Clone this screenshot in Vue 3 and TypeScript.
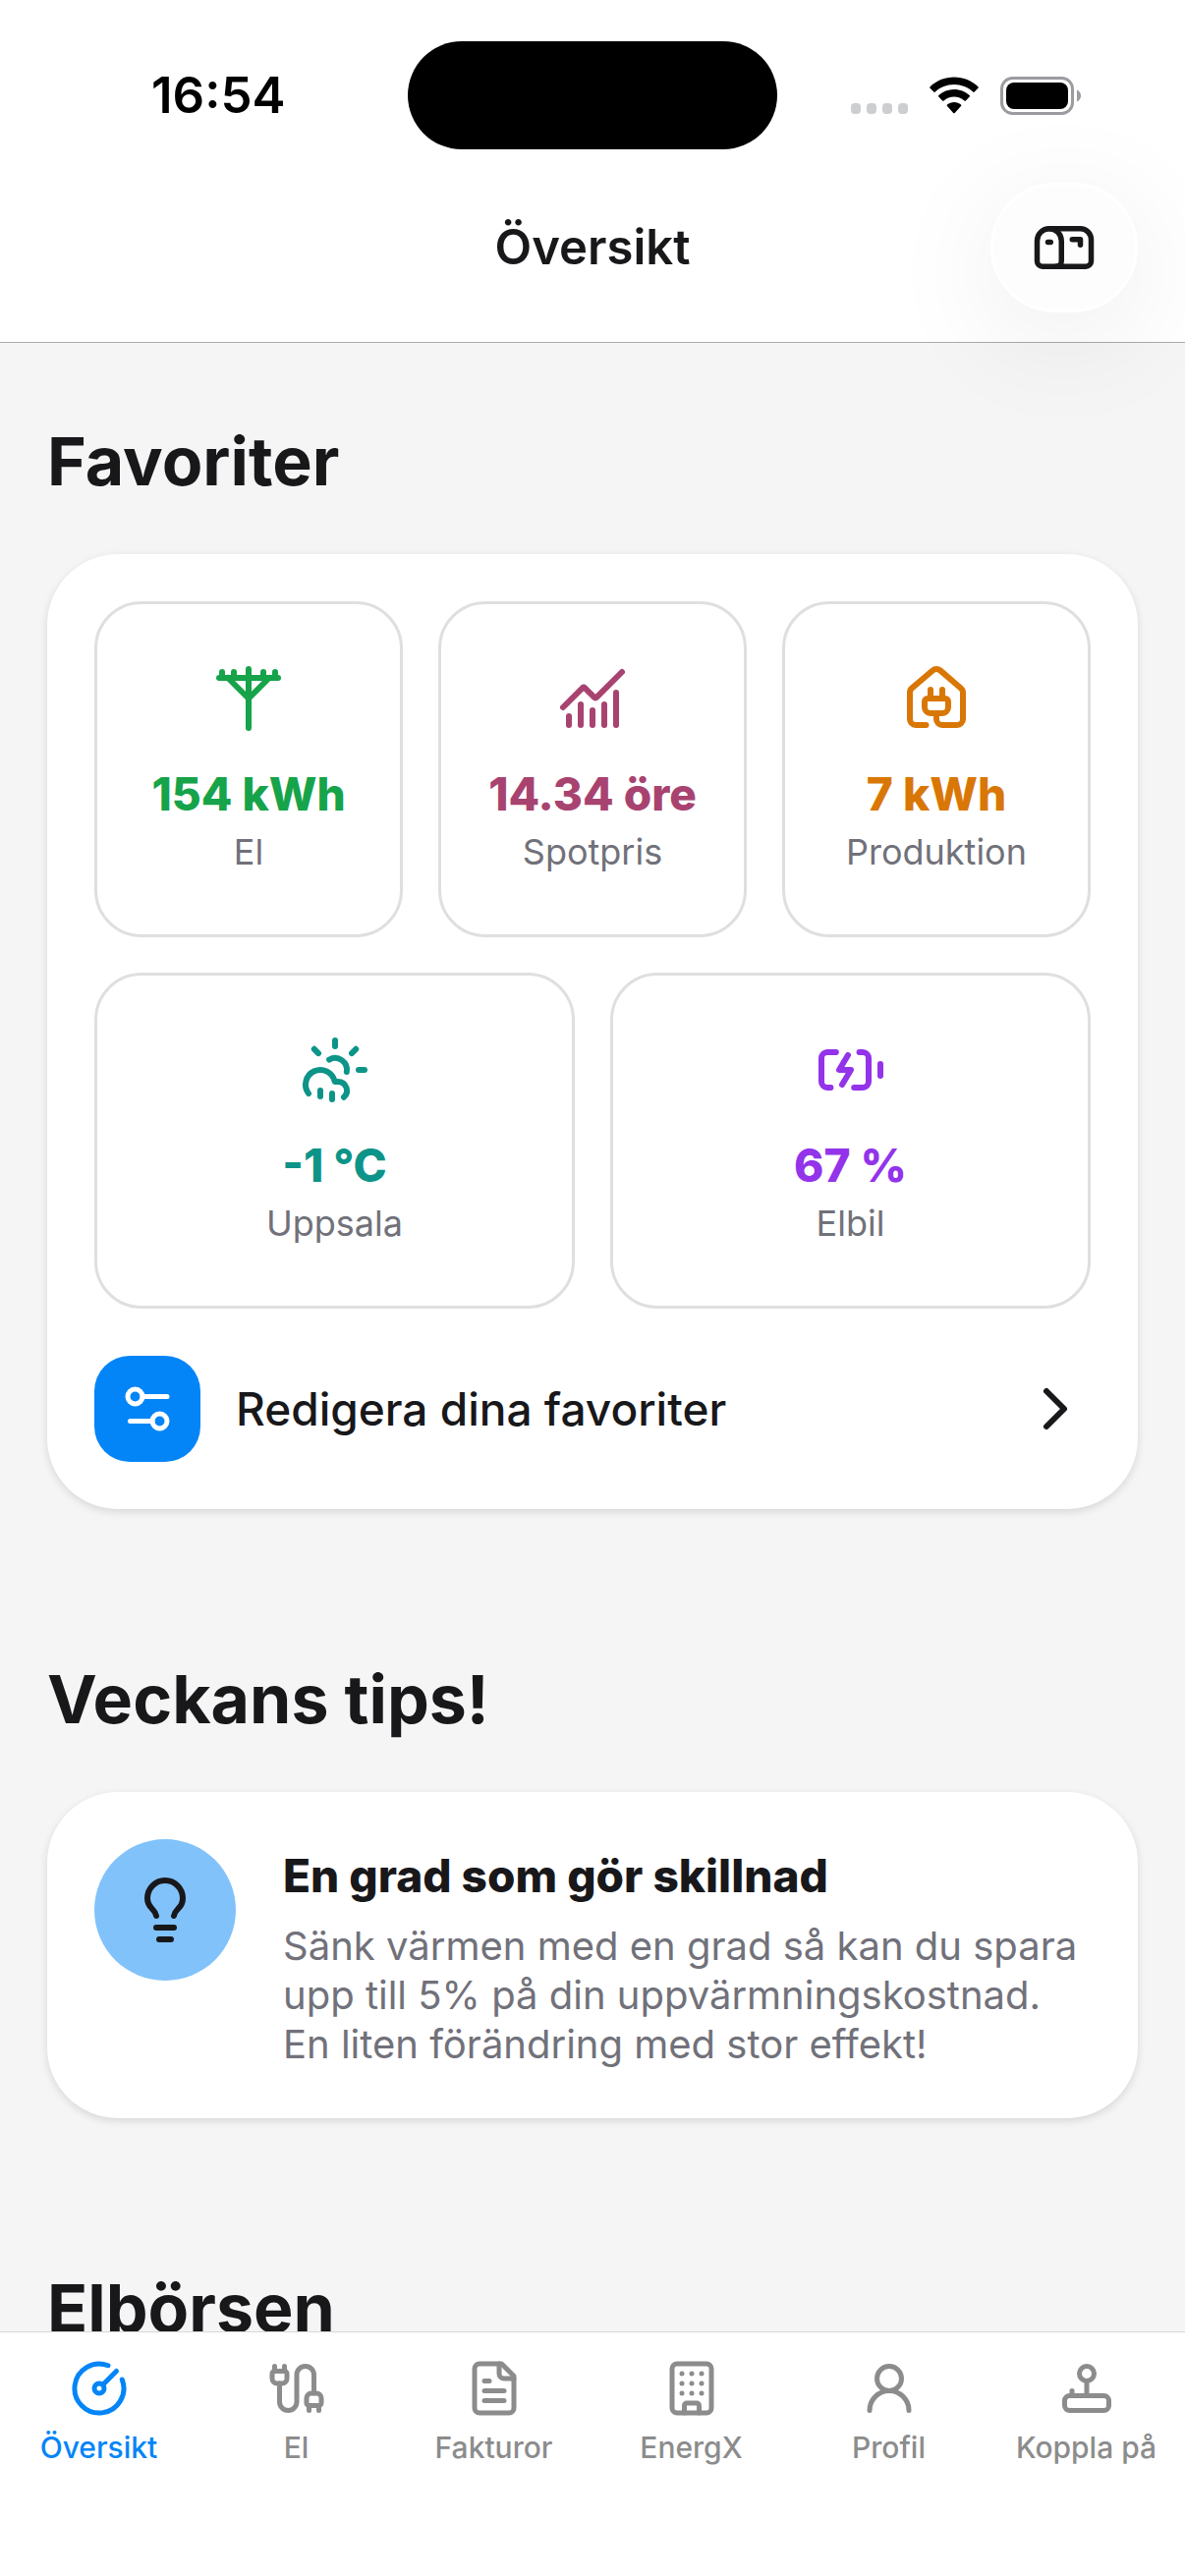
<script setup lang="ts">
import { ref } from 'vue'

interface Favorite {
  value: string
  label: string
  tone: string
  paths: string[]
}

interface Tab {
  label: string
  paths: string[]
}

const topRow: Favorite[] = [
  {
    value: '154 kWh',
    label: 'El',
    tone: 'green',
    paths: ['M12 2v20', 'M2 5h20', 'M3 3v2', 'M7 3v2', 'M17 3v2', 'M21 3v2', 'm19 5-7 7-7-7'],
  },
  {
    value: '14.34 öre',
    label: 'Spotpris',
    tone: 'plum',
    paths: [
      'M12 16v5',
      'M16 14v7',
      'M20 10v11',
      'm22 3-8.646 8.646a.5.5 0 0 1-.708 0L9.354 8.354a.5.5 0 0 0-.707 0L2 15',
      'M4 18v3',
      'M8 14v7',
    ],
  },
  {
    value: '7 kWh',
    label: 'Produktion',
    tone: 'orange',
    paths: [
      'M10 12V9',
      'M14 12V9',
      'M15 12a1 1 0 0 1 1 1v2a2 2 0 0 1-2 2h-4a2 2 0 0 1-2-2v-2a1 1 0 0 1 1-1z',
      'M8.5 21H5a2 2 0 0 1-2-2v-9a2 2 0 0 1 .709-1.528l7-6a2 2 0 0 1 2.582 0l7 6A2 2 0 0 1 21 10v9a2 2 0 0 1-2 2h-5a2 2 0 0 1-2-2v-2',
    ],
  },
]

const bottomRow: Favorite[] = [
  {
    value: '-1 °C',
    label: 'Uppsala',
    tone: 'teal',
    paths: [
      'M12 2v2',
      'm4.93 4.93 1.41 1.41',
      'M20 12h2',
      'm19.07 4.93-1.41 1.41',
      'M15.947 12.65a4 4 0 0 0-5.925-4.128',
      'M3 20a5 5 0 1 1 8.9-4H13a3 3 0 0 1 2 5.24',
      'M11 20v2',
      'M7 19v2',
    ],
  },
  {
    value: '67 %',
    label: 'Elbil',
    tone: 'violet',
    paths: [
      'm11 7-3 5h4l-3 5',
      'M14.856 6H16a2 2 0 0 1 2 2v8a2 2 0 0 1-2 2h-2.935',
      'M22 14v-4',
      'M5.14 18H4a2 2 0 0 1-2-2V8a2 2 0 0 1 2-2h2.936',
    ],
  },
]

const rows = [topRow, bottomRow]

const tabs: Tab[] = [
  {
    label: 'Översikt',
    paths: ['M15.6 2.7a10 10 0 1 0 5.7 5.7', 'M10 12a2 2 0 1 0 4 0a2 2 0 1 0-4 0', 'M13.4 10.6 19 5'],
  },
  {
    label: 'El',
    paths: [
      'M17 19a1 1 0 0 1-1-1v-2a2 2 0 0 1 2-2h2a2 2 0 0 1 2 2v2a1 1 0 0 1-1 1z',
      'M17 21v-2',
      'M19 14V6.5a1 1 0 0 0-7 0v11a1 1 0 0 1-7 0V10',
      'M21 21v-2',
      'M3 5V3',
      'M4 10a2 2 0 0 1-2-2V6a1 1 0 0 1 1-1h4a1 1 0 0 1 1 1v2a2 2 0 0 1-2 2z',
      'M7 5V3',
    ],
  },
  {
    label: 'Fakturor',
    paths: [
      'M15 2H6a2 2 0 0 0-2 2v16a2 2 0 0 0 2 2h12a2 2 0 0 0 2-2V7Z',
      'M14 2v4a2 2 0 0 0 2 2h4',
      'M10 9H8',
      'M16 13H8',
      'M16 17H8',
    ],
  },
  {
    label: 'EnergX',
    paths: [
      'M6 2h12a2 2 0 0 1 2 2v16a2 2 0 0 1-2 2H6a2 2 0 0 1-2-2V4a2 2 0 0 1 2-2z',
      'M9 22v-3a1 1 0 0 1 1-1h4a1 1 0 0 1 1 1v3',
      'M8 6h.01M12 6h.01M16 6h.01',
      'M8 10h.01M12 10h.01M16 10h.01',
      'M8 14h.01M12 14h.01M16 14h.01',
    ],
  },
  {
    label: 'Profil',
    paths: ['M7 8a5 5 0 1 0 10 0a5 5 0 1 0-10 0', 'M20 21a8 8 0 0 0-16 0'],
  },
  {
    label: 'Koppla på',
    paths: [
      'M21 17a2 2 0 0 0-2-2H5a2 2 0 0 0-2 2v2a2 2 0 0 0 2 2h14a2 2 0 0 0 2-2v-2Z',
      'M6 15v-2',
      'M12 15V9',
      'M9 6a3 3 0 1 0 6 0a3 3 0 1 0-6 0',
    ],
  },
]

const activeTab = ref(0)
</script>

<template>
  <div class="app">
    <header class="header">
      <div class="status">
        <span class="time">16:54</span>
        <span class="island"></span>
        <div class="indicators">
          <svg class="dots" viewBox="0 0 58 38" aria-hidden="true">
            <rect x="0" y="27" width="10" height="11" rx="4" />
            <rect x="16" y="27" width="10" height="11" rx="4" />
            <rect x="32" y="27" width="10" height="11" rx="4" />
            <rect x="48" y="27" width="10" height="11" rx="4" />
          </svg>
          <svg class="wifi" viewBox="0 0 50 38" aria-hidden="true">
            <path d="M25 0.5C15.500 0.500 6.900 4.200 0.600 10.200a1 1 0 0 0 0 1.500l3.700 3.800a1 1 0 0 0 1.500 0C10.900 10.800 17.600 8 25 8s14.100 2.800 19.200 7.500a1 1 0 0 0 1.500 0l3.700-3.800a1 1 0 0 0 0-1.500C43.100 4.200 34.500 0.500 25 0.500z" />
            <path d="M25 13c-6 0-11.500 2.300-15.700 6.100a1 1 0 0 0 0 1.500l3.800 3.800a1 1 0 0 0 1.500 0C17.400 22 21 20.400 25 20.400s7.600 1.600 10.400 4a1 1 0 0 0 1.500 0l3.800-3.800a1 1 0 0 0 0-1.500C36.500 15.300 31 13 25 13z" />
            <path d="M25 26c-2.700 0-5.100 1-7 2.600a1 1 0 0 0 0 1.500l6.200 6.800a1 1 0 0 0 1.500 0l6.300-6.800a1 1 0 0 0 0-1.500C30.100 27 27.700 26 25 26z" />
          </svg>
          <svg class="battery" viewBox="0 0 82 39" aria-hidden="true">
            <rect x="1.500" y="1.500" width="72" height="36" rx="11" fill="none" stroke="#9b9ba0" stroke-width="3" />
            <rect x="6" y="6" width="63" height="27" rx="8" fill="#000" />
            <path d="M78 13.500c2.500 1.200 4 3.300 4 6s-1.500 4.800-4 6z" fill="#9b9ba0" />
          </svg>
        </div>
      </div>
      <div class="toolbar">
        <h1 class="title">Översikt</h1>
        <button class="mail" type="button" aria-label="Meddelanden">
          <svg class="icon icon-mail" viewBox="0 0 24 24" aria-hidden="true">
            <path d="M22 17a2 2 0 0 1-2 2H4a2 2 0 0 1-2-2V9.500C2 7 4 5 6.500 5H18c2.200 0 4 1.800 4 4v8Z" />
            <path d="M15 9h3v2" />
            <path d="M6.500 5C9 5 11 7 11 9.500V17a2 2 0 0 1-2 2" />
            <path d="M6 10h1" />
          </svg>
        </button>
      </div>
    </header>

    <main class="content">
      <section class="section">
        <h2 class="heading">Favoriter</h2>
        <div class="card">
          <div class="rows">
            <div v-for="(row, i) in rows" :key="i" class="row">
              <button v-for="item in row" :key="item.label" type="button" class="tile" :class="item.tone">
                <svg class="icon icon-large" viewBox="0 0 24 24" aria-hidden="true">
                  <path v-for="d in item.paths" :key="d" :d="d" />
                </svg>
                <span class="value">{{ item.value }}</span>
                <span class="label">{{ item.label }}</span>
              </button>
            </div>
          </div>
          <button class="edit" type="button">
            <span class="edit-badge">
              <svg class="icon icon-medium" viewBox="0 0 24 24" aria-hidden="true">
                <path d="M20 7h-10" />
                <path d="M14 17H5" />
                <circle cx="17" cy="17" r="3" />
                <circle cx="7" cy="7" r="3" />
              </svg>
            </span>
            <span class="edit-text">Redigera dina favoriter</span>
            <svg class="icon icon-large" viewBox="0 0 24 24" aria-hidden="true">
              <path d="m9 18 6-6-6-6" />
            </svg>
          </button>
        </div>
      </section>

      <section class="section">
        <h2 class="heading">Veckans tips!</h2>
        <article class="card tip">
          <span class="tip-badge">
            <svg class="icon icon-large" viewBox="0 0 24 24" aria-hidden="true">
              <path d="M15 14c.2-1 .7-1.700 1.500-2.500 1-.9 1.500-2.200 1.500-3.500A6 6 0 0 0 6 8c0 1 .2 2.200 1.500 3.500.7.7 1.300 1.500 1.500 2.500" />
              <path d="M9 18h6" />
              <path d="M10 22h4" />
            </svg>
          </span>
          <div class="tip-body">
            <h3 class="tip-title">En grad som gör skillnad</h3>
            <p class="tip-text">
              Sänk värmen med en grad så kan du spara upp till 5% på din uppvärmningskostnad. En liten
              förändring med stor effekt!
            </p>
          </div>
        </article>
      </section>

      <section class="section">
        <h2 class="heading">Elbörsen</h2>
      </section>
    </main>

    <nav class="tabs">
      <a
        v-for="(tab, i) in tabs"
        :key="tab.label"
        href="#"
        class="tab"
        :class="{ active: i === activeTab }"
        @click.prevent="activeTab = i"
      >
        <svg class="icon icon-medium" viewBox="0 0 24 24" aria-hidden="true">
          <path v-for="d in tab.paths" :key="d" :d="d" />
        </svg>
        <span class="tab-label">{{ tab.label }}</span>
      </a>
    </nav>
  </div>
</template>

<style>
body {
  margin: 0;
}
</style>

<style scoped>
.app {
  display: flex;
  flex-direction: column;
  height: 100vh;
  overflow: hidden;
  background: #f5f5f5;
  color: #18181b;
  font-family: Inter, 'Liberation Sans', sans-serif;
}

button {
  margin: 0;
  padding: 0;
  border: 0;
  background: none;
  color: inherit;
  font: inherit;
  text-align: left;
}

.icon {
  flex: none;
  fill: none;
  stroke: currentColor;
  stroke-width: 2;
  stroke-linecap: round;
  stroke-linejoin: round;
}

.icon-large {
  width: 72px;
  height: 72px;
}

.icon-medium {
  width: 60px;
  height: 60px;
}

.icon-mail {
  width: 66px;
  height: 66px;
}

.header {
  position: relative;
  z-index: 1;
  flex: none;
  border-bottom: 1px solid #ababab;
  background: #fff;
}

.status {
  display: grid;
  grid-template-columns: 1fr auto 1fr;
  align-items: center;
  padding: 42px 106px 34px;
  color: #000;
}

.time {
  padding-left: 48px;
  font-size: 51px;
  font-weight: 600;
  line-height: 62px;
}

.island {
  width: 376px;
  height: 110px;
  border-radius: 55px;
  background: #000;
}

.indicators {
  display: flex;
  align-items: center;
  justify-content: flex-end;
  gap: 22px;
}

.dots {
  width: 58px;
  height: 38px;
  fill: #cdced0;
}

.wifi {
  width: 50px;
  height: 38px;
}

.battery {
  width: 82px;
  height: 39px;
}

.toolbar {
  display: grid;
  grid-template-columns: 1fr auto 1fr;
  align-items: center;
  padding: 0 48px 30px;
}

.title {
  grid-column: 2;
  margin: 0;
  font-size: 49px;
  font-weight: 600;
  line-height: 62px;
}

.mail {
  display: flex;
  align-items: center;
  justify-content: center;
  justify-self: end;
  box-sizing: border-box;
  width: 150px;
  height: 132px;
  border: 3px solid #fff;
  border-radius: 66px;
  background: #fdfdfd;
  box-shadow: 0 24px 120px rgba(0, 0, 0, 0.08);
}

.content {
  display: flex;
  flex: 1;
  flex-direction: column;
  gap: 150px;
  min-height: 0;
  padding: 77px 48px 0;
  overflow-y: auto;
  scrollbar-width: none;
}

.section {
  flex: none;
}

.heading {
  margin: 0 0 52px;
  font-size: 68px;
  font-weight: 700;
  line-height: 86px;
}

.card {
  padding: 48px;
  border-radius: 72px;
  background: #fff;
  box-shadow: 0 3px 9px rgba(0, 0, 0, 0.12);
}

.rows {
  display: flex;
  flex-direction: column;
  gap: 36px;
}

.row {
  display: flex;
  gap: 36px;
}

.tile {
  display: flex;
  flex: 1 1 0;
  flex-direction: column;
  align-items: center;
  min-width: 0;
  padding: 60px 0 57px;
  border: 3px solid #dfdfdf;
  border-radius: 48px;
}

.value {
  margin-top: 29px;
  font-size: 46px;
  font-weight: 800;
  line-height: 64px;
  white-space: nowrap;
}

.label {
  color: #71717a;
  font-size: 36px;
  line-height: 54px;
}

.green {
  color: #16a34a;
}

.plum {
  color: #a84370;
}

.orange {
  color: #d97706;
}

.teal {
  color: #0d9488;
}

.violet {
  color: #9333ea;
}

.edit {
  display: flex;
  align-items: center;
  gap: 36px;
  width: 100%;
  margin-top: 48px;
}

.edit-badge {
  display: flex;
  align-items: center;
  justify-content: center;
  width: 108px;
  height: 108px;
  border-radius: 36px;
  background: #0485f7;
  color: #fff;
}

.edit-text {
  flex: 1;
  font-size: 46px;
  font-weight: 500;
  line-height: 62px;
}

.tip {
  display: flex;
  align-items: flex-start;
  gap: 48px;
}

.tip-badge {
  display: flex;
  flex: none;
  align-items: center;
  justify-content: center;
  width: 144px;
  height: 144px;
  border-radius: 50%;
  background: #81c2fb;
}

.tip-body {
  flex: 1;
  padding: 6px 0 2px;
}

.tip-title {
  margin: 0 0 16px;
  font-size: 46px;
  font-weight: 800;
  line-height: 62px;
}

.tip-text {
  margin: 0;
  color: #71717a;
  font-size: 40px;
  line-height: 50px;
}

.tabs {
  display: flex;
  flex: none;
  padding: 27px 0 113px;
  border-top: 1px solid #d8d8d8;
  background: #fff;
}

.tab {
  display: flex;
  flex: 1 1 0;
  flex-direction: column;
  align-items: center;
  gap: 12px;
  min-width: 0;
  color: #8c8c8c;
  text-decoration: none;
}

.tab.active {
  color: #0485f7;
}

.tab-label {
  font-size: 30px;
  font-weight: 500;
  line-height: 36px;
  white-space: nowrap;
}
</style>
